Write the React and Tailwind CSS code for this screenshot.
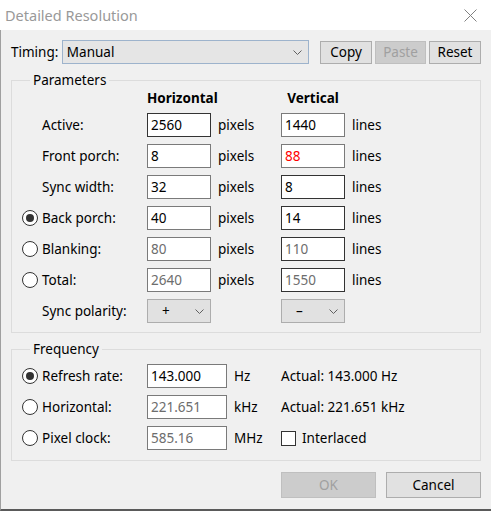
import React from "react";

const font = { fontFamily: '"Noto Sans", "Open Sans", sans-serif' };

function Radio({ checked }) {
  return (
    <span className="flex h-[16px] w-[16px] items-center justify-center rounded-full border border-[#333333] bg-white">
      {checked && <span className="h-[8px] w-[8px] rounded-full bg-[#333333]" />}
    </span>
  );
}

function Field({ value, width = "w-[64px]", dark, disabled, red }) {
  const border = dark ? "border-[#333333]" : "border-[#7a7a7a]";
  const color = red ? "text-[#ff0000]" : disabled ? "text-[#6d6d6d]" : "text-black";
  return (
    <div className={`flex h-[24px] ${width} items-center border ${border} bg-white px-[3px] ${color}`}>
      {value}
    </div>
  );
}

function Chevron({ className }) {
  return (
    <svg className={className} width="9" height="5" viewBox="0 0 9 5" fill="none">
      <path d="M0.5 0.5 L4.5 4.5 L8.5 0.5" stroke="#606060" strokeWidth="1" />
    </svg>
  );
}

function Polarity({ sign }) {
  return (
    <div className="flex h-[24px] w-[64px] items-center border border-[#adadad] bg-[#e1e1e1] pl-[14px] pr-[6px]">
      <span className="flex-1">{sign}</span>
      <Chevron />
    </div>
  );
}

function Btn({ children, disabled, className = "" }) {
  return (
    <div
      className={`flex items-center justify-center border ${
        disabled ? "border-[#bfbfbf] bg-[#cccccc] text-[#a0a0a0]" : "border-[#adadad] bg-[#e1e1e1] text-black"
      } ${className}`}
    >
      {children}
    </div>
  );
}

const rows = [
  { label: "Active:", h: "2560", hDark: true, v: "1440" },
  { label: "Front porch:", h: "8", v: "88", vRed: true },
  { label: "Sync width:", h: "32", v: "8", vDark: true },
  { label: "Back porch:", radio: true, checked: true, h: "40", v: "14", vDark: true },
  { label: "Blanking:", radio: true, h: "80", hDis: true, v: "110", vDis: true, vDark: true },
  { label: "Total:", radio: true, h: "2640", hDis: true, v: "1550", vDis: true, vDark: true },
];

const freq = [
  { label: "Refresh rate:", checked: true, value: "143.000", unit: "Hz", extra: "Actual: 143.000 Hz" },
  { label: "Horizontal:", value: "221.651", dis: true, unit: "kHz", extra: "Actual: 221.651 kHz" },
  { label: "Pixel clock:", value: "585.16", dis: true, unit: "MHz", check: true },
];

export default function App() {
  return (
    <div className="h-[511px] w-[491px] overflow-hidden bg-[#f0f0f0] text-[13.5px] leading-[16px] text-black" style={font}>
      {/* title bar */}
      <div className="flex h-[30px] items-center justify-between bg-white pl-[5px] pr-[14px]">
        <span className="text-[14.5px] text-[#999999]">Detailed Resolution</span>
        <svg width="13" height="13" viewBox="0 0 13 13">
          <path d="M0.5 0.5 L12.5 12.5 M12.5 0.5 L0.5 12.5" stroke="#808080" strokeWidth="1" />
        </svg>
      </div>

      <div className="flex h-[481px] flex-col border-b-2 border-l border-[#5a5a5a] border-l-[#a0a0a0] pl-[10px] pr-[10px]">
        {/* timing row */}
        <div className="mt-[10px] flex h-[24px] items-center">
          <span className="w-[51px]">Timing:</span>
          <div className="flex h-[24px] w-[248px] items-center border border-[#9db3cc] bg-[#e5e5e5] pl-[4px] pr-[6px]">
            <span className="flex-1">Manual</span>
            <Chevron />
          </div>
          <div className="ml-[11px] flex gap-[3px]">
            <Btn className="h-[23px] w-[52px]">Copy</Btn>
            <Btn disabled className="h-[23px] w-[51px]">Paste</Btn>
            <Btn className="h-[23px] w-[52px]">Reset</Btn>
          </div>
        </div>

        {/* parameters */}
        <fieldset className="mt-[8px] w-[470px] border border-[#dcdcdc] pb-[9px] pl-[10px]">
          <legend className="ml-[8px] px-[3px]">Parameters</legend>
          <div className="flex h-[25px] items-start font-bold">
            <span className="ml-[125px] w-[64px] pt-[2px] text-center">Horizontal</span>
            <span className="ml-[70px] w-[64px] pt-[2px] text-center">Vertical</span>
          </div>
          <div className="flex flex-col gap-[7px]">
            {rows.map((r) => (
              <div key={r.label} className="flex h-[24px] items-center">
                <span className="w-[20px]">{r.radio && <Radio checked={r.checked} />}</span>
                <span className="w-[105px]">{r.label}</span>
                <Field value={r.h} dark={r.hDark} disabled={r.hDis} />
                <span className="w-[70px] pl-[7px]">pixels</span>
                <Field value={r.v} dark={r.vDark} disabled={r.vDis} red={r.vRed} />
                <span className="pl-[7px]">lines</span>
              </div>
            ))}
            <div className="flex h-[24px] items-center">
              <span className="w-[20px]" />
              <span className="w-[105px]">Sync polarity:</span>
              <Polarity sign="+" />
              <span className="w-[70px]" />
              <Polarity sign="–" />
            </div>
          </div>
        </fieldset>

        {/* frequency */}
        <fieldset className="mt-[8px] w-[470px] border border-[#dcdcdc] pb-[10px] pl-[10px] pt-[7px]">
          <legend className="ml-[8px] px-[3px]">Frequency</legend>
          <div className="flex flex-col gap-[7px]">
            {freq.map((f) => (
              <div key={f.label} className="flex h-[24px] items-center">
                <span className="w-[20px]">
                  <Radio checked={f.checked} />
                </span>
                <span className="w-[105px]">{f.label}</span>
                <Field value={f.value} width="w-[80px]" disabled={f.dis} />
                <span className="w-[54px] pl-[7px]">{f.unit}</span>
                {f.check ? (
                  <span className="flex items-center gap-[6px]">
                    <span className="h-[15px] w-[15px] border border-[#333333] bg-white" />
                    Interlaced
                  </span>
                ) : (
                  <span>{f.extra}</span>
                )}
              </div>
            ))}
          </div>
        </fieldset>

        {/* buttons */}
        <div className="mt-[11px] flex w-[470px] justify-end gap-[10px]">
          <Btn disabled className="h-[26px] w-[95px]">OK</Btn>
          <Btn className="h-[26px] w-[95px]">Cancel</Btn>
        </div>
      </div>
    </div>
  );
}
